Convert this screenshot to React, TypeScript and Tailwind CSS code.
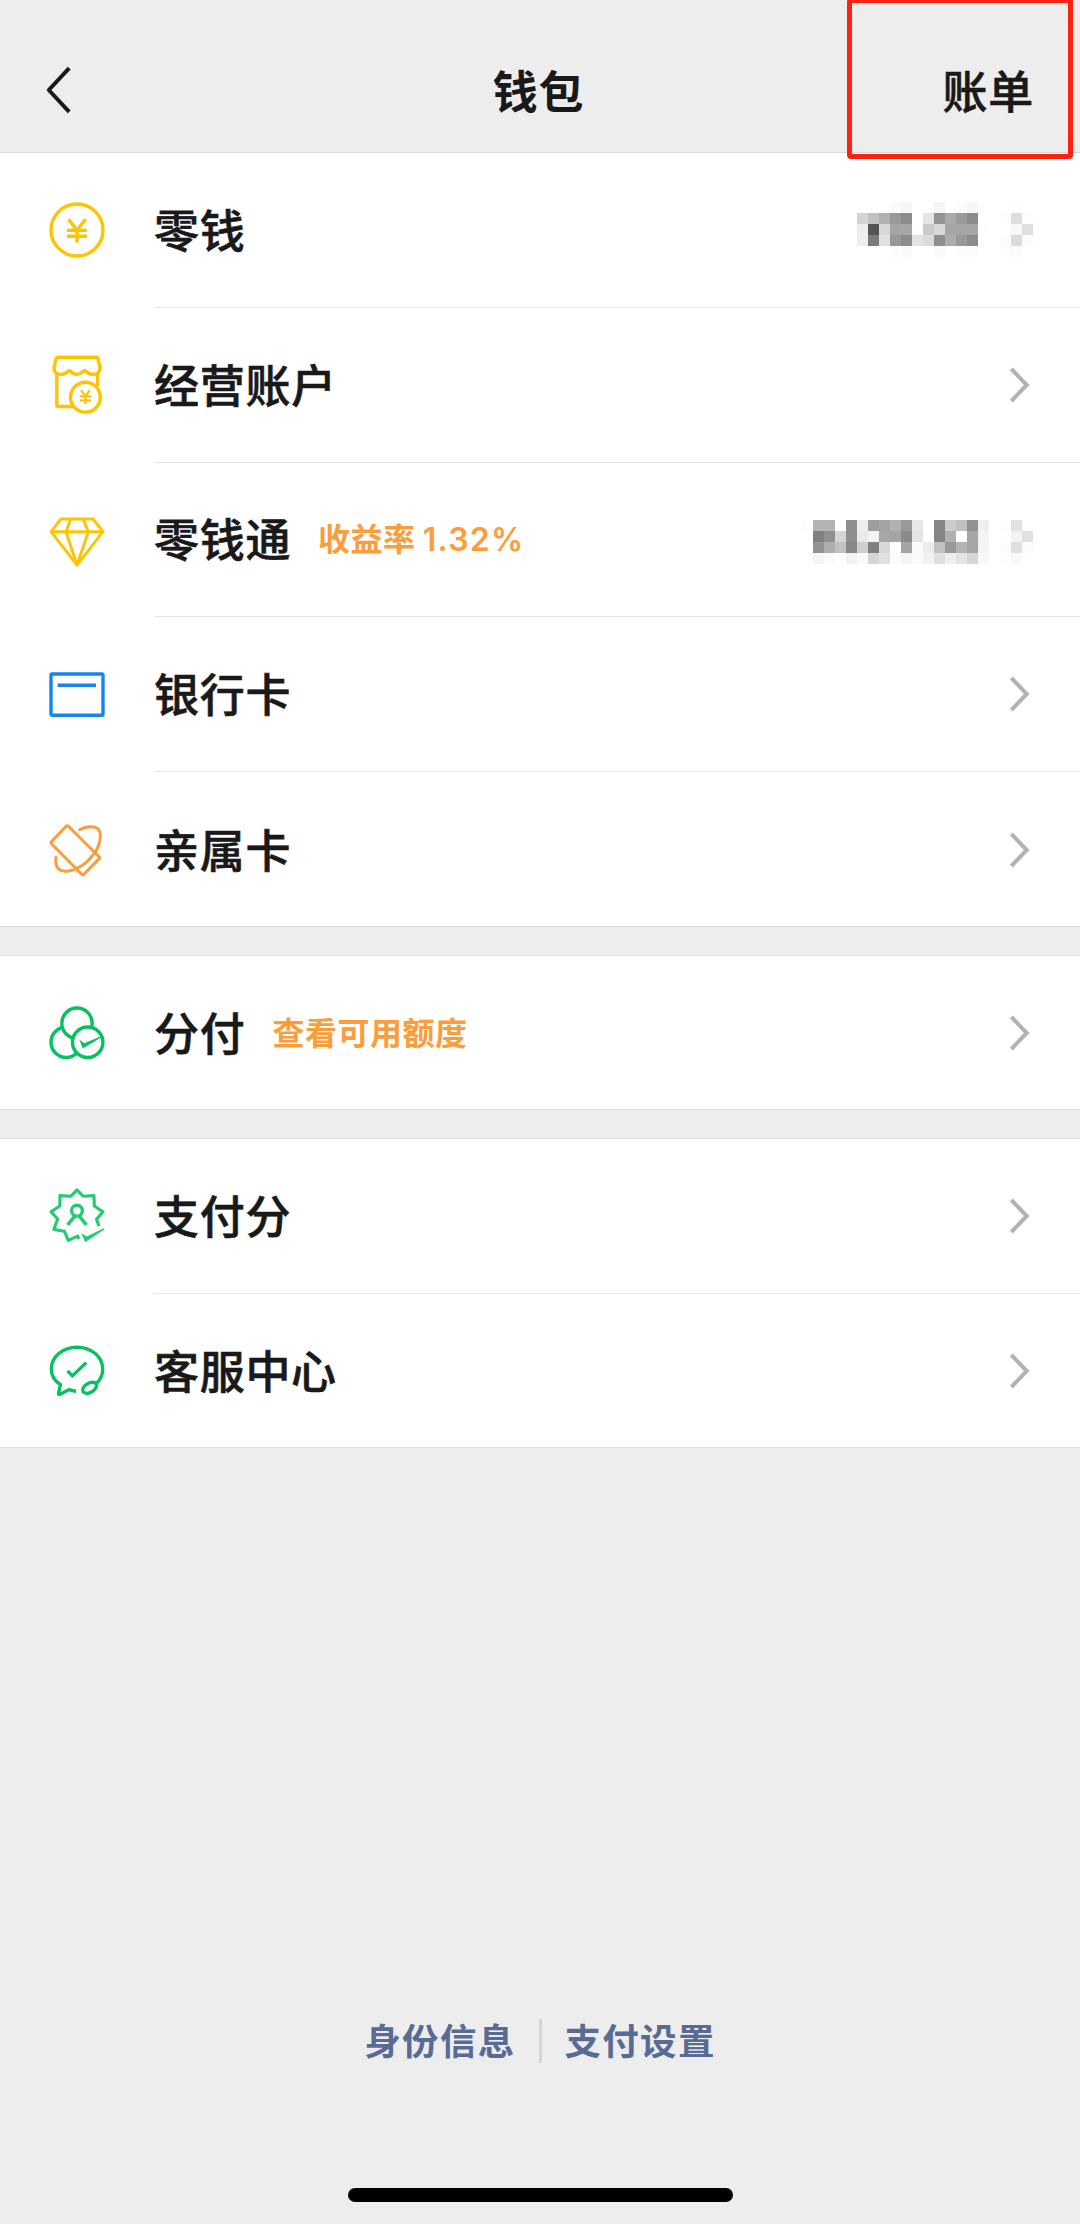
import type { ReactNode } from 'react';

interface WalletItem {
  id: string;
  label: string;
  icon: ReactNode;
  note?: string;
  noteValue?: string;
  mosaic?: string[];
  mosaicClass?: string;
}

const YELLOW = '#FFC300';
const ORANGE = '#FA9D3B';
const GREEN = '#07C160';

// Masked amounts, one hex pair per 11px block (includes the masked arrow)
const BALANCE_MASK = [
  'ff ff ff fb f6 ff ff f5 ff fb f6 ff ff ff fd ff',
  'd4 c1 b1 99 8b ff e5 93 aa 99 8b ff ff fd dd fd',
  'ed 54 d8 a5 a6 fe cb d8 a5 a5 a5 fe ff ff f8 df',
  'ee 7a e0 99 8b e3 dc 8e ad 99 8b ff ff fc db fb',
  'ff ff ff fc fa ff ff f9 ff fc fb ff ff fd fb ff',
];

const FUND_MASK = [
  'fd b4 b4 ff 8e ee 9e a4 b1 99 e7 ff 85 cb c0 91 ee ff fd e2 ff',
  'ff 80 8f d5 8e ea f3 a6 a5 8b e4 ff 85 b0 ff a5 f4 ff ff f3 e0',
  'ff 92 ae c1 87 ce 7f d8 fe a4 f9 ec c1 98 b4 a5 f5 ff fc df fb',
  'ff f5 fb ff f2 fa d6 e0 fb f4 fa f2 df ee e4 d6 f8 ff fd f9 ff',
];

function Icon({ color, children }: { color: string; children: ReactNode }) {
  return (
    <svg
      viewBox="0 0 60 60"
      className="h-[60px] w-[60px] shrink-0"
      fill="none"
      stroke={color}
      strokeWidth="3.4"
      strokeLinejoin="round"
    >
      {children}
    </svg>
  );
}

function Chevron() {
  return (
    <svg viewBox="0 0 20 36" className="h-9 w-5" fill="none" stroke="#B2B2B2" strokeWidth="4">
      <path d="M1.4 2 16.8 18 1.4 34" />
    </svg>
  );
}

function Mosaic({ rows, className }: { rows: string[]; className?: string }) {
  return (
    <div className={className}>
      {rows.map((row, y) => (
        <div key={y} className="flex">
          {row.split(' ').map((shade, x) => (
            <span key={x} className="h-[11px] w-[11px]" style={{ backgroundColor: `#${shade}${shade}${shade}` }} />
          ))}
        </div>
      ))}
    </div>
  );
}

const groups: WalletItem[][] = [
  [
    {
      id: 'balance',
      label: '零钱',
      mosaic: BALANCE_MASK,
      mosaicClass: '-mr-[3px]',
      icon: (
        <Icon color={YELLOW}>
          <circle cx="30" cy="30" r="26" />
          <path d="M21.5 19.2 30 30.3 38.5 19.2M30 30V42.4M20 30.4H39.8M20 36.2H39.8" />
        </Icon>
      ),
    },
    {
      id: 'business',
      label: '经营账户',
      icon: (
        <Icon color={YELLOW}>
          <path d="M11 2.3H49.2Q50.6 2.3 50.9 3.5L53 12.6C53.2 17 50 19.4 46.5 19.4 42.5 19.4 40.5 18 38.6 16.2Q37.4 15 36.2 16.2C34 18.4 32.5 19.4 30 19.4 27.5 19.4 25.7 18.4 23.6 16.2Q22.4 15 21.2 16.2C19 18.2 17.3 19.4 13.8 19.4 9.8 19.4 6.7 17 7 12.6L9.2 3.5Q9.5 2.3 11 2.3Z" />
          <path d="M9.8 18.5V50.2Q9.8 51.5 11.1 51.5H26.5M50.5 18.5V31" />
          <circle cx="38.4" cy="42.2" r="14.9" />
          <path d="M34 35.2 38.4 41.3 42.8 35.2M38.4 41V49M32.8 41.3H44M32.8 45.3H44" strokeWidth="2.2" />
        </Icon>
      ),
    },
    {
      id: 'fund',
      label: '零钱通',
      note: '收益率',
      noteValue: '1.32%',
      mosaic: FUND_MASK,
      mosaicClass: 'mt-1.5 -mr-[3px]',
      icon: (
        <Icon color={YELLOW}>
          <path d="M14 9H46L56 21.7 30 55.2 4 21.7ZM4 21.7H56M23.7 9 19 21.7 30 55 41.3 21.7 36.2 9" strokeWidth="2.9" />
        </Icon>
      ),
    },
    {
      id: 'cards',
      label: '银行卡',
      icon: (
        <Icon color="#1485EE">
          <rect x="4" y="9" width="52" height="41.2" rx="1.2" />
          <path d="M10.7 20.3H49" />
        </Icon>
      ),
    },
    {
      id: 'family',
      label: '亲属卡',
      icon: (
        <Icon color={ORANGE}>
          <path d="M19.2 6.3Q20.3 5.2 21.4 6.3L52 36.8Q53 37.8 52 38.9L36.9 54.3Q35.8 55.3 34.7 54.3L4.5 23.8Q3.4 22.7 4.5 21.6Z" strokeWidth="3" />
          <path
            d="M32.7 9.8C37.5 6.8 47 5.2 51 8.8C55.5 13.5 53.2 25.5 46.6 34.4C40 43 31 49.5 22 51C13.2 52.4 7.6 49.5 9 37.2"
            strokeWidth="3"
            strokeLinecap="round"
          />
        </Icon>
      ),
    },
  ],
  [
    {
      id: 'fenfu',
      label: '分付',
      note: '查看可用额度',
      icon: (
        <Icon color={GREEN}>
          <circle cx="19.2" cy="39.2" r="15.2" />
          <circle cx="30" cy="20.2" r="15.2" fill="white" />
          <circle cx="40.7" cy="39.2" r="15.2" fill="white" />
          <path d="M32.2 36.4 37.2 40.2 54 33.2V34.6L35.8 45.4Z" fill={GREEN} stroke="none" />
        </Icon>
      ),
    },
  ],
  [
    {
      id: 'score',
      label: '支付分',
      icon: (
        <Icon color="#22CC6E">
          <path d="M52 40 49.5 33.3 56 25.7 47.3 20 47 9.6 36.3 10.3 30 3.9 23.7 10.3 13 9.6 12.8 20 4 25.7 10.7 33 6.8 43.4 17.4 45.2 21.2 54.4 30.7 50.2 32 53" strokeWidth="3.1" />
          <circle cx="30" cy="24.7" r="5.4" />
          <path d="M28.4 29.4 20.6 38.9M31.6 29.4 39.4 38.9" />
          <path d="M34.3 47 39.7 50.4 57.3 42V43.4L38.2 56.2Z" fill="#22CC6E" stroke="none" />
        </Icon>
      ),
    },
    {
      id: 'service',
      label: '客服中心',
      icon: (
        <Icon color={GREEN}>
          <path d="M29.2 50.2Q25 49.8 22.3 48.6L13 53.2Q11.2 54 11.6 52L13.4 43.7C7.3 39.5 4.3 34.5 4.3 28.2 4.3 15.8 15.6 6.2 30 6.2S55.7 15.8 55.7 28.2C55.7 33.5 53.6 38.3 49.8 42" />
          <ellipse cx="42.6" cy="46.8" rx="7.6" ry="4.6" transform="rotate(-31 42.6 46.8)" />
          <path d="M20.5 29.9 25.4 34.9 39.2 21.6" />
        </Icon>
      ),
    },
  ],
];

function WalletRow({ item, last }: { item: WalletItem; last: boolean }) {
  return (
    <div className="flex pl-[47px]">
      <div className="flex items-center">{item.icon}</div>
      <div className={`ml-[47px] flex flex-1 items-center pr-[50px] ${last ? '' : 'border-b border-[#E5E5E5]'}`}>
        <span className="pt-[3px] text-[45px] leading-none font-medium tracking-[0.7px] text-[#191919] [-webkit-text-stroke:0.6px_#191919]">
          {item.label}
        </span>
        {item.note && (
          <span className="ml-[27px] pt-0.5 text-[32px] leading-none font-bold tracking-[0.5px] text-[#FA9D3B]">
            {item.note}
            {item.noteValue && <span className="ml-[7px] font-semibold tracking-[1.3px]">{item.noteValue}</span>}
          </span>
        )}
        <div className="ml-auto">
          {item.mosaic ? <Mosaic rows={item.mosaic} className={item.mosaicClass} /> : <Chevron />}
        </div>
      </div>
    </div>
  );
}

export default function App() {
  return (
    <div className="flex h-[2224px] w-[1080px] flex-col overflow-hidden bg-[#EDEDED] font-['Inter','Noto_Sans_CJK_SC',sans-serif]">
      <header className="relative grid h-[153px] shrink-0 grid-cols-3 items-center border-b border-[#D9D9D9] pt-8 pr-[46px] pl-[46px] text-[45px] leading-none tracking-[0.7px] text-[#191919]">
        <svg viewBox="0 0 25 48" className="mb-1 h-12 w-[25px]" fill="none" stroke="#191919" strokeWidth="4">
          <path d="M23.2 2.2 2.8 24 23.2 45.8" strokeLinejoin="round" />
        </svg>
        <h1 className="pr-[3px] text-center font-bold">钱包</h1>
        <span className="text-right font-medium [-webkit-text-stroke:0.6px_#191919]">账单</span>
        {/* highlight around the bill entry */}
        <div className="absolute -top-0.5 left-[847px] h-[161px] w-[226px] rounded-[4px] border-[5px] border-[#FF2213]" />
      </header>

      <section className="grid h-[774px] shrink-0 auto-rows-[154.8px] border-b border-[#DCDCDC] bg-white">
        {groups[0].map((item, i) => (
          <WalletRow key={item.id} item={item} last={i === groups[0].length - 1} />
        ))}
      </section>
      <section className="mt-7 grid h-[155px] shrink-0 border-y border-[#E0E0E0] bg-white">
        {groups[1].map((item, i) => (
          <WalletRow key={item.id} item={item} last={i === groups[1].length - 1} />
        ))}
      </section>
      <section className="mt-7 grid h-[310px] shrink-0 auto-rows-[154.8px] border-y border-[#E0E0E0] bg-white">
        {groups[2].map((item, i) => (
          <WalletRow key={item.id} item={item} last={i === groups[2].length - 1} />
        ))}
      </section>

      <footer className="mt-auto flex flex-col items-center pb-[22px]">
        <div className="flex items-center text-[36.5px] leading-none font-bold tracking-[1.3px] text-[#576B95]">
          <span className="pt-0.5">身份信息</span>
          <span className="mr-[23px] ml-[23px] h-11 w-[3px] bg-[#D5D5D5]" />
          <span className="pt-0.5">支付设置</span>
        </div>
        <div className="mt-[125px] h-[14px] w-[385px] rounded-full bg-black" />
      </footer>
    </div>
  );
}
